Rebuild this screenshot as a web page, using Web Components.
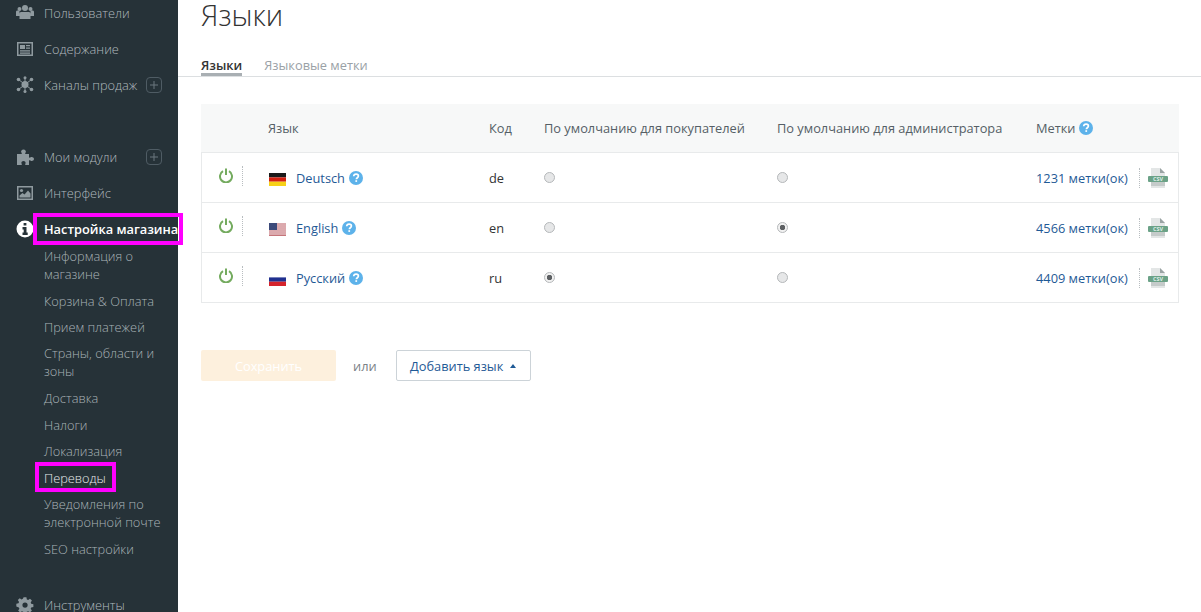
<!DOCTYPE html>
<html lang="ru">
<head>
<meta charset="utf-8">
<title>Языки</title>
<style>
  html, body { margin: 0; height: 612px; overflow: hidden; background: #fff; }
  body { font-family: "Open Sans", "Liberation Sans", sans-serif; display: flex; }
</style>
</head>
<body>
<admin-sidebar>
  <nav-item icon="users" style="margin-top:-5px">Пользователи</nav-item>
  <nav-item icon="news">Содержание</nav-item>
  <nav-item icon="nodes" plus>Каналы продаж</nav-item>
  <nav-item icon="puzzle" plus style="margin-top:36px">Мои модули</nav-item>
  <nav-item icon="image">Интерфейс</nav-item>
  <nav-item icon="info" active mark>Настройка магазина</nav-item>
  <sub-item style="margin-top:-4px">Информация о<br>магазине</sub-item>
  <sub-item>Корзина &amp; Оплата</sub-item>
  <sub-item>Прием платежей</sub-item>
  <sub-item>Страны, области и<br>зоны</sub-item>
  <sub-item>Доставка</sub-item>
  <sub-item style="margin-top:1px">Налоги</sub-item>
  <sub-item>Локализация</sub-item>
  <sub-item mark>Переводы</sub-item>
  <sub-item>Уведомления по<br>электронной почте</sub-item>
  <sub-item>SEO настройки</sub-item>
  <nav-item icon="cog" style="margin-top:25px">Инструменты</nav-item>
</admin-sidebar>
<page-main>
  <lang-table></lang-table>
  <form-actions></form-actions>
</page-main>

<script>
const ICONS = {
  users: `<circle cx="9" cy="4" r="3"/><circle cx="3.500" cy="5" r="2"/><circle cx="14.500" cy="5" r="2"/><path d="M5 8h8c1 0 1.500.8 1.500 2v5h-11v-5c0-1.200.5-2 1.500-2zM0 8c0-1 .6-1.500 1.500-1.500H3.500V12H0zM18 8c0-1-.6-1.500-1.500-1.500H14.500V12H18z"/>`,
  news: `<path fill-rule="evenodd" d="M1 2h16v14H1zM2.500 3.500v11h13v-11z"/><path d="M4 5h5v4H4zM10 5h4v1.300h-4zM10 7.500h4v1.300h-4zM4 10.300h10v1.200H4zM4 12.500h10v1.200H4z"/>`,
  nodes: `<circle cx="9" cy="8.500" r="3.500"/><circle cx="2.500" cy="3.500" r="1.800"/><circle cx="15.500" cy="3.500" r="1.800"/><circle cx="2.500" cy="13.500" r="1.800"/><circle cx="15.500" cy="13.500" r="1.800"/><circle cx="9" cy="1.800" r="1.500"/><circle cx="9" cy="15.500" r="1.500"/><path d="M2.500 3.500l13 10M15.500 3.500l-13 10M9 2v13" stroke="currentColor" fill="none"/>`,
  puzzle: `<path d="M1 6h4.500c.6 0 .3-1-.3-1.700C4.700 3 5.800 1.500 7.500 1.500S10.300 3 9.800 4.300C9.200 5 8.900 6 9.500 6H13v3.300c0 .7 1 .5 1.700 0 1.300-.7 3.300.2 3.300 1.700s-2 2.400-3.300 1.700c-.7-.5-1.700-.7-1.700 0V17H9.500c-.6 0-.3-1 0-1.500.5-1.300-.6-2.500-2-2.500s-2.500 1.200-2 2.500c.3.500.6 1.500 0 1.500H1z"/>`,
  image: `<path fill-rule="evenodd" d="M1 2h16v14H1zM2.500 3.500v11h13v-11z"/><circle cx="5.500" cy="6.500" r="1.600"/><path d="M3.500 13.500v-2l3-2.500 2 1.500 3.500-4 2.500 3v4z"/>`,
  cog: `<path fill-rule="evenodd" d="M7.400 0h3.200l.5 2.500 1.500.6 2.100-1.400 2.200 2.200-1.400 2.100.6 1.500 2.500.5v3.200l-2.500.5-.6 1.500 1.400 2.100-2.200 2.200-2.100-1.400-1.500.6-.5 2.500H7.400l-.5-2.500-1.500-.6-2.100 1.400-2.200-2.200 1.400-2.100-.6-1.500L-1 10.600V7.400l2.500-.5.600-1.500L.7 3.300l2.200-2.200L5 2.500l1.500-.6zM9 6a3 3 0 1 0 0 6 3 3 0 0 0 0-6z" transform="translate(1.200 1.200) scale(.87)"/>`,
  info: `<path fill-rule="evenodd" d="M9 .5a8.500 8.500 0 1 0 0 17 8.500 8.500 0 0 0 0-17zM7.600 3h2.800v2.600H7.600zM6.500 7h4v5.500h1.200V15H6.500v-2.500h1.200v-3H6.500z"/>`
};

const markStyle = `
  .mark { position: relative; }
  :host([mark]) .mark::after {
    content: ''; position: absolute; border: 4px solid #f0f; pointer-events: none;
  }`;

class AdminSidebar extends HTMLElement {
  constructor() {
    super();
    this.attachShadow({mode: 'open'}).innerHTML = `<style>
      :host { display: flex; flex-direction: column; flex: none; width: 178px; height: 612px;
        background: #263238; z-index: 1; }
    </style><slot></slot>`;
  }
}

class NavItem extends HTMLElement {
  constructor() {
    super();
    const icon = ICONS[this.getAttribute('icon')] || '';
    const plus = this.hasAttribute('plus')
      ? `<svg class="plus" width="16" height="16" viewBox="0 0 16 16"><rect x=".5" y=".5" width="15" height="15" rx="3.500" fill="none" stroke="#4f5c64"/><path d="M8 4v8M4 8h8" stroke="#6a777e"/></svg>` : '';
    this.attachShadow({mode: 'open'}).innerHTML = `<style>
      :host { display: flex; align-items: center; height: 36px; padding-left: 16px; padding-right: 16px; flex: none;
        color: #b0b9be; font-size: 12.800px; font-weight: 300; }
      :host([active]) { color: #fff; font-weight: 600; }
      svg.ico { width: 18px; height: 18px; fill: #8f9a9f; color: #8f9a9f; flex: none; margin-right: 10px; }
      :host([active]) svg.ico { fill: #fff; }
      .plus { margin-left: auto; flex: none; }
      ${markStyle}
      :host([mark]) .mark::after { left: -11px; right: -5px; top: -7px; bottom: -7px; }
      span { white-space: nowrap; }
    </style><svg class="ico" viewBox="0 0 18 18">${icon}</svg><span class="mark"><slot></slot></span>${plus}`;
  }
}

class SubItem extends HTMLElement {
  constructor() {
    super();
    this.attachShadow({mode: 'open'}).innerHTML = `<style>
      :host { display: block; flex: none; padding: 4.200px 0 4.200px 44px; color: #a9b2b7;
        font-size: 12.800px; font-weight: 300; line-height: 18px; }
      :host([mark]) { color: #e6e9ea; }
      span { display: inline-block; }
      ${markStyle}
      :host([mark]) .mark::after { left: -9px; right: -10px; top: -7px; bottom: -5px; }
    </style><span class="mark"><slot></slot></span>`;
  }
}

class PageMain extends HTMLElement {
  constructor() {
    super();
    this.attachShadow({mode: 'open'}).innerHTML = `<style>
      :host { display: block; flex: 1; min-width: 0; color: #333; }
      h1 { margin: 0; padding: 0 0 0 23px; font-size: 29px; font-weight: 300; line-height: 30px; color: #333; }
      .tabs { display: flex; gap: 22px; margin-top: 25px; padding-left: 23px; height: 21px;
        border-bottom: 1px solid #dcdfe1; font-size: 12.800px; line-height: 20px; }
      .tab { color: #9aa1a6; font-weight: 400; }
      .tab.on { color: #333; font-weight: 600; border-bottom: 3px solid #a9afb3; height: 18px; }
      .body { padding: 27px 22px 0 23px; }
    </style>
    <h1>Языки</h1>
    <div class="tabs"><div class="tab on">Языки</div><div class="tab">Языковые метки</div></div>
    <div class="body"><slot></slot></div>`;
  }
}

const QMARK = `<svg class="q" width="14" height="14" viewBox="0 0 14 14"><circle cx="7" cy="7" r="7" fill="#5db2ea"/><path d="M4.700 5.300c.1-1.400 1.100-2.100 2.400-2.100 1.400 0 2.300.8 2.300 1.900 0 1.700-2 1.600-2 3.100" fill="none" stroke="#fff" stroke-width="1.700"/><rect x="6.400" y="9.200" width="1.700" height="1.700" fill="#fff"/></svg>`;

const FLAGS = {
  de: `<rect width="17" height="4.400" fill="#1a1a1a"/><rect y="4.400" width="17" height="4.300" fill="#d32011"/><rect y="8.700" width="17" height="4.300" fill="#f7d117"/>`,
  us: `<rect width="17" height="13" fill="#fff"/><path d="M0 1h17M0 3h17M0 5h17M0 7h17M0 9h17M0 11h17M0 12.700h17" stroke="#b8555c" stroke-width="1"/><rect width="8" height="7" fill="#3c4a7a"/>`,
  ru: `<rect width="17" height="4.400" fill="#fff"/><rect y="4.400" width="17" height="4.300" fill="#20308f"/><rect y="8.700" width="17" height="4.300" fill="#d5232c"/>`
};

const CSV = `<svg width="20" height="20" viewBox="0 0 20 20"><path d="M3 0h9l5 5v15H3z" fill="#e3e6e6"/><path d="M12 0l5 5h-5z" fill="#9aa3a3"/><rect x="0" y="8" width="20" height="6" rx="1" fill="#6ba287"/><text x="10" y="13" text-anchor="middle" font-size="5.500" font-weight="700" fill="#dfeee7" font-family="Open Sans, sans-serif">CSV</text><rect x="3" y="14" width="14" height="4" fill="#c5cbca"/></svg>`;

const POWER = `<svg width="14" height="15" viewBox="0 0 14 15"><path d="M4 3.200a6 6 0 1 0 6 0" fill="none" stroke="#74ab5f" stroke-width="2"/><path d="M7 .5v6.500" stroke="#74ab5f" stroke-width="2"/></svg>`;

class LangRow extends HTMLElement {
  constructor() {
    super();
    const a = n => this.getAttribute(n);
    const radio = on => `<radio-dot ${on ? 'checked' : ''}></radio-dot>`;
    this.attachShadow({mode: 'open'}).innerHTML = `<style>
      :host { display: grid; grid-template-columns: 66px 221px 55px 233px 259px 1fr; align-items: center;
        height: 50px; box-sizing: border-box;
        border-bottom: 1px solid #e8eaeb; font-size: 12.800px; color: #333; }
      .pw { display: flex; align-items: center; height: 22px; padding-left: 17px; margin-top: -4px; }
      .sep { width: 0; height: 20px; margin-left: 9px; border-left: 1px dotted #b8bdc0; }
      .name { display: flex; align-items: center; padding-left: 1px; }
      .flag { width: 17px; height: 13px; margin: 4px 10px 0 0; flex: none; }
      a { color: #1f5a96; text-decoration: none; white-space: nowrap; }
      .q { margin-left: 4px; flex: none; }
      .tags { display: flex; align-items: center; }
      .tags a { width: 91px; text-align: right; }
      .sep2 { height: 20px; border-left: 1px dotted #b8bdc0; margin: 0 8px 0 12px; }
    </style>
    <div class="pw">${POWER}<div class="sep"></div></div>
    <div class="name"><svg class="flag" viewBox="0 0 17 13">${FLAGS[a('flag')]}</svg><a>${a('name')}</a>${QMARK}</div>
    <div>${a('code')}</div>
    <div>${radio(a('def') === 'buyer')}</div>
    <div>${radio(a('def') === 'admin')}</div>
    <div class="tags"><a>${a('tags')} метки(ок)</a><span class="sep2"></span>${CSV}</div>`;
  }
}

class RadioDot extends HTMLElement {
  constructor() {
    super();
    this.attachShadow({mode: 'open'}).innerHTML = `<style>
      :host { display: block; width: 11px; height: 11px; box-sizing: border-box; border-radius: 50%;
        border: 1px solid #b5b8ba; background: #e6e7e8; }
      :host([checked]) { background: radial-gradient(circle, #5d6063 0 2.500px, #f1f1f1 3px); }
    </style>`;
  }
}

class LangTable extends HTMLElement {
  constructor() {
    super();
    this.attachShadow({mode: 'open'}).innerHTML = `<style>
      :host { display: block; font-size: 12.800px; }
      .head { display: grid; grid-template-columns: 67px 221px 55px 233px 259px 1fr; align-items: center; height: 48px;
        background: #f7f8f8; border-bottom: 1px solid #e8eaeb; color: #555f66; }
      .rows { border-left: 1px solid #e8eaeb; border-right: 1px solid #e8eaeb; }
      .head div { display: flex; align-items: center; gap: 4px; white-space: nowrap; }
    </style>
    <div class="head"><span></span><div>Язык</div><div>Код</div>
      <div>По умолчанию для покупателей</div><div>По умолчанию для администратора</div><div>Метки ${QMARK}</div></div>
    <div class="rows">
      <lang-row flag="de" name="Deutsch" code="de" def="" tags="1231"></lang-row>
      <lang-row flag="us" name="English" code="en" def="admin" tags="4566"></lang-row>
      <lang-row flag="ru" name="Русский" code="ru" def="buyer" tags="4409"></lang-row>
    </div>`;
  }
}

class FormActions extends HTMLElement {
  constructor() {
    super();
    this.attachShadow({mode: 'open'}).innerHTML = `<style>
      :host { display: flex; align-items: center; margin-top: 47px; font-size: 12.800px; }
      .save { width: 135px; height: 31px; border-radius: 2px; background: #fdf0dd; color: #fff;
        display: flex; align-items: center; justify-content: center; }
      .or { width: 60px; text-align: left; padding-left: 17px; box-sizing: border-box; color: #7b8287; }
      .add { width: 135px; height: 31px; box-sizing: border-box; border: 1px solid #ccd3d8; border-radius: 2px;
        display: flex; align-items: center; padding-left: 13px; color: #1f5a96; }
      .add i { width: 0; height: 0; margin-left: 7px; border: 3.500px solid transparent; border-top: 0;
        border-bottom: 4px solid #1f5a96; }
    </style>
    <div class="save">Сохранить</div><span class="or">или</span>
    <div class="add">Добавить язык<i></i></div>`;
  }
}

customElements.define('admin-sidebar', AdminSidebar);
customElements.define('nav-item', NavItem);
customElements.define('sub-item', SubItem);
customElements.define('page-main', PageMain);
customElements.define('radio-dot', RadioDot);
customElements.define('lang-row', LangRow);
customElements.define('lang-table', LangTable);
customElements.define('form-actions', FormActions);
</script>
</body>
</html>
